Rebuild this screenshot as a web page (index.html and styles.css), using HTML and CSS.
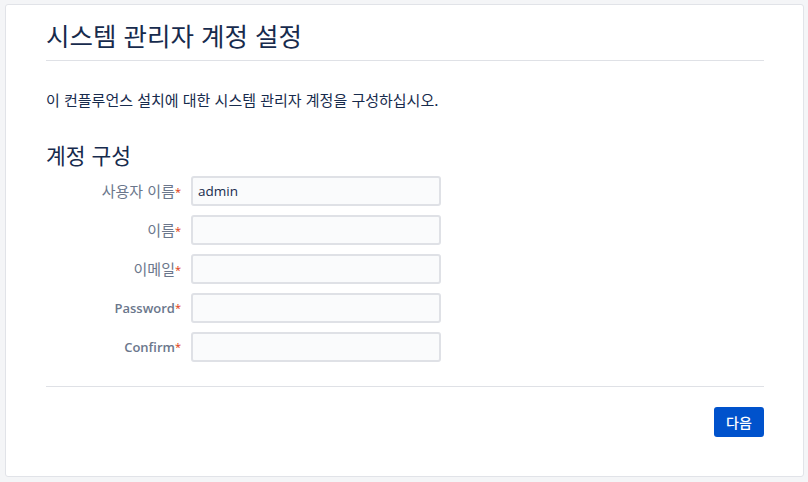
FILE: index.html
```html
<!DOCTYPE html>
<html lang="ko">
<head>
<meta charset="utf-8">
<link rel="stylesheet" href="styles.css">
</head>
<body>
<div class="card">
  <h1 class="title">시스템 관리자 계정 설정</h1>
  <p class="desc">이 컨플루언스 설치에 대한 시스템 관리자 계정을 구성하십시오.</p>
  <h2 class="subtitle">계정 구성</h2>
  <form class="form">
    <div class="row"><label class="label">사용자 이름<span class="req">*</span></label><input class="field" type="text" value="admin"></div>
    <div class="row"><label class="label">이름<span class="req">*</span></label><input class="field" type="text"></div>
    <div class="row"><label class="label">이메일<span class="req">*</span></label><input class="field" type="text"></div>
    <div class="row"><label class="label latin">Password<span class="req">*</span></label><input class="field" type="password"></div>
    <div class="row"><label class="label latin">Confirm<span class="req">*</span></label><input class="field" type="password"></div>
  </form>
  <div class="footer">
    <button class="btn" type="button">다음</button>
  </div>
</div>
</body>
</html>
```
FILE: styles.css
```css
html, body {
  margin: 0;
  padding: 0;
}
body {
  background: #f4f5f7;
  padding: 4px 4px 5px 5px;
  font-family: "Noto Sans", "Noto Sans CJK KR", sans-serif;
  color: #172b4d;
}
.card {
  background: #fff;
  border: 1px solid #e1e3e8;
  border-radius: 3px;
  box-sizing: border-box;
  height: 473px;
  padding: 12px 39px 0 40px;
  display: flex;
  flex-direction: column;
}
.title {
  margin: 0;
  font-family: "Noto Sans CJK KR", sans-serif;
  font-weight: 400;
  font-size: 25.5px;
  line-height: 36px;
  padding-bottom: 7px;
  border-bottom: 1px solid #dfe1e6;
  color: #172b4d;
}
.desc {
  margin: 29px 0 0;
  font-family: "Noto Sans CJK KR", sans-serif;
  font-size: 15px;
  line-height: 20px;
  color: #172b4d;
}
.subtitle {
  margin: 31px 0 0;
  font-family: "Noto Sans CJK KR", sans-serif;
  font-weight: 400;
  font-size: 21.5px;
  line-height: 28px;
  color: #172b4d;
}
.form {
  margin: 7px 0 0;
  display: flex;
  flex-direction: column;
  gap: 9px;
}
.row {
  display: flex;
  align-items: center;
  gap: 10px;
}
.label {
  width: 135px;
  text-align: right;
  font-family: "Noto Sans CJK KR", sans-serif;
  font-size: 15px;
  line-height: 20px;
  color: #6b778c;
}
.label.latin {
  font-family: "Open Sans", "Noto Sans", sans-serif;
  font-weight: 600;
  font-size: 13px;
}
.req {
  color: #de350b;
  font-family: "Open Sans", sans-serif;
  font-weight: 400;
  font-size: 11px;
  vertical-align: 1px;
}
.field {
  box-sizing: border-box;
  width: 250px;
  height: 30px;
  margin: 0;
  border: 2px solid #dfe1e6;
  border-radius: 3px;
  background: #fafbfc;
  padding: 0 5px;
  font-family: "Open Sans", "Noto Sans", sans-serif;
  font-size: 13.5px;
  color: #172b4d;
  outline: none;
}
.footer {
  margin-top: 24px;
  border-top: 1px solid #dfe1e6;
  padding-top: 20px;
  display: flex;
  justify-content: flex-end;
}
.btn {
  width: 50px;
  height: 30px;
  border: 0;
  border-radius: 3px;
  background: #0052cc;
  color: #fff;
  font-family: "Noto Sans CJK KR", sans-serif;
  font-size: 14px;
  font-weight: 500;
  padding: 0;
}
```
